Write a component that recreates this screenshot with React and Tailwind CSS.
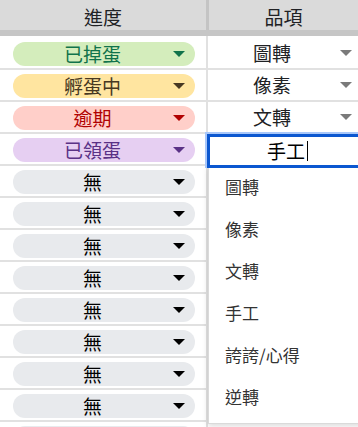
import React from 'react';

const progress = [
    { label: '已掉蛋', bg: 'bg-[#d4edbc]', fg: 'text-[#11734b]' },
    { label: '孵蛋中', bg: 'bg-[#ffe5a0]', fg: 'text-[#473822]' },
    { label: '逾期', bg: 'bg-[#ffcfc9]', fg: 'text-[#b10202]' },
    { label: '已領蛋', bg: 'bg-[#e6cff2]', fg: 'text-[#5a3286]' },
    ...Array.from({ length: 8 }, () => ({ label: '無', bg: 'bg-[#e8eaed]', fg: 'text-black' })),
    // last row only peeks in at the bottom edge
    { label: '', bg: 'bg-[#e8eaed]', fg: 'text-black' },
];

const items = ['圖轉', '像素', '文轉'];
const options = ['圖轉', '像素', '文轉', '手工', '誇誇/心得', '逆轉'];

const Caret = ({ className }) => (
    <svg width="12" height="6" viewBox="0 0 12 6" className={className}>
        <polygon points="0,0 12,0 6,6" fill="currentColor" />
    </svg>
);

const App = () => {
    return (
        <div className="relative w-[358px] h-[427px] overflow-hidden bg-white font-['Noto_Sans_CJK_TC','Noto_Sans',sans-serif] text-[19px] text-[#202124]">
            {/* header */}
            <div className="flex h-[30px] bg-[#dadada]">
                <div className="w-[206px] flex items-center justify-center pt-[4px]">進度</div>
                <div className="w-[3px] bg-[#c4c4c4]" />
                <div className="flex-1 flex items-center justify-center pt-[4px]">品項</div>
            </div>
            <div className="h-[6px] bg-[#c6c6c6]" />

            <div className="flex">
                {/* 進度 column */}
                <div className="w-[206px]">
                    {progress.map((p, i) => (
                        <div
                            key={i}
                            className={`h-[32px] border-t-2 ${i === 0 ? 'border-white' : 'border-[#e1e1e1]'} pt-[4px] px-[13px] pr-[11px]`}
                        >
                            <div className={`flex items-center h-[24px] rounded-full ${p.bg} ${p.fg}`}>
                                <span className="flex-1 text-center leading-[24px]">{p.label}</span>
                                <Caret className="ml-[1px] mr-[10px]" />
                            </div>
                        </div>
                    ))}
                </div>
                <div className="w-[2px] bg-[#e1e1e1]" />

                {/* 品項 column */}
                <div className="flex-1">
                    {Array.from({ length: 13 }, (_, i) => (
                        <div
                            key={i}
                            className={`h-[32px] border-t-2 ${i === 0 ? 'border-white' : 'border-[#e1e1e1]'} flex items-center`}
                        >
                            {items[i] && (
                                <>
                                    <span className="flex-1 text-center">{items[i]}</span>
                                    <Caret className="ml-[4px] mr-[6px] text-[#7a7a7a]" />
                                </>
                            )}
                        </div>
                    ))}
                </div>
            </div>

            {/* dropdown */}
            <div className="absolute left-[208px] top-[166px] w-[160px] h-[258px] bg-white border-l border-b border-[#dadada] shadow-[0_2px_6px_rgba(0,0,0,0.15)]">
                {options.map((o) => (
                    <div key={o} className="h-[42px] flex items-center pl-[16px] text-[17px] text-[#333333]">
                        {o}
                    </div>
                ))}
            </div>

            {/* cell editor */}
            <div className="absolute left-[205px] top-[132px] w-[160px] h-[36px] border-l-2 border-t-2 border-[#a8c7fa]">
                <div className="h-full border-[3px] border-[#0b57d0] bg-white flex items-center pl-[57px]">
                    <span className="text-black">手工</span>
                    <span className="w-px h-[20px] bg-black ml-[2px]" />
                </div>
            </div>
        </div>
    );
};

export default App;
